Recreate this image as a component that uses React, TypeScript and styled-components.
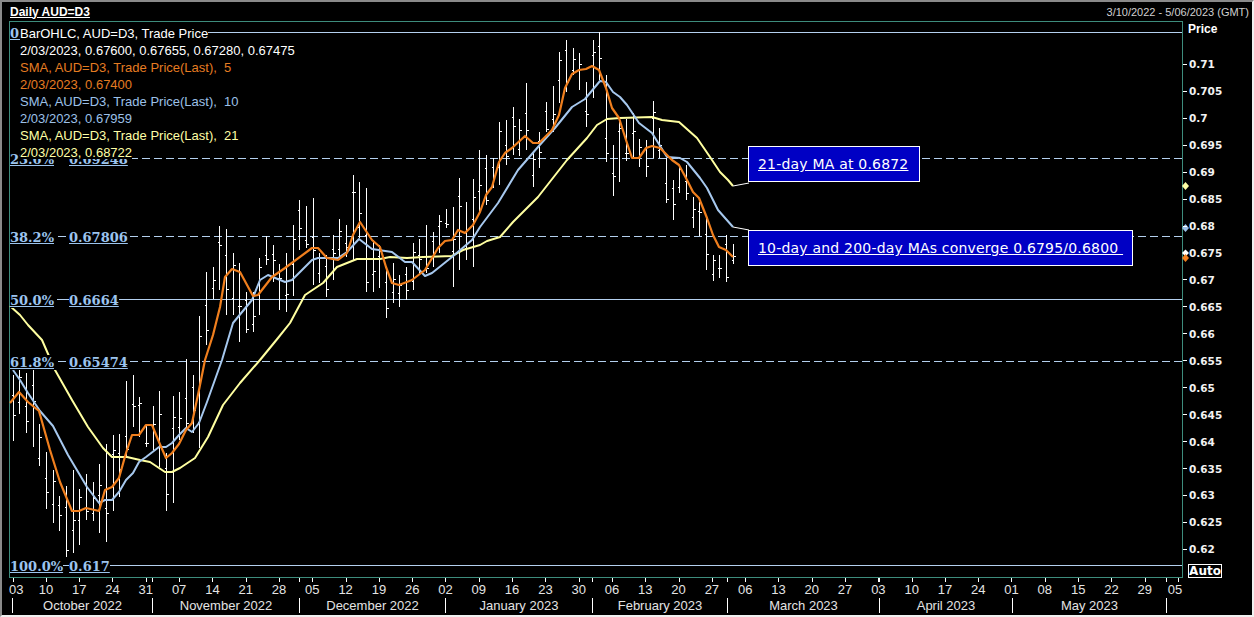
import React from "react";
import styled, { createGlobalStyle } from "styled-components";

const GlobalStyle = createGlobalStyle`
  html, body {
    margin: 0;
    background: #000;
    overflow: hidden;
  }
`;

// [high, low] of each daily bar, in page pixels
const bars: [number, number][] = [
  [375, 441], [370, 414], [373, 433], [370, 447], [424, 466], [452, 509], [470, 523], [496, 531], [486, 557], [470, 553],
  [489, 545], [474, 520], [482, 521], [464, 533], [444, 542], [435, 511], [434, 497], [381, 457], [375, 427], [397, 437],
  [425, 447], [406, 450], [391, 467], [453, 511], [396, 503], [392, 440], [359, 430], [375, 433], [316, 448], [272, 345],
  [267, 299], [226, 290], [229, 315], [253, 315], [263, 342], [292, 333], [292, 332], [258, 315], [236, 265], [245, 282],
  [264, 310], [253, 312], [225, 296], [200, 250], [206, 248], [198, 285], [253, 283], [255, 297], [235, 280], [219, 260],
  [225, 257], [175, 260], [182, 238], [188, 292], [240, 292], [245, 288], [267, 318], [263, 303], [275, 307], [267, 300],
  [243, 290], [239, 275], [225, 273], [232, 267], [215, 253], [209, 228], [207, 287], [178, 270], [202, 260], [179, 267],
  [150, 213], [155, 205], [158, 188], [122, 185], [120, 165], [107, 155], [119, 156], [83, 150], [152, 187], [132, 168],
  [102, 132], [86, 132], [52, 103], [40, 92], [48, 75], [53, 90], [82, 127], [40, 98], [32, 80], [75, 162],
  [145, 196], [118, 182], [119, 161], [113, 158], [139, 167], [140, 177], [101, 158], [128, 158], [158, 203], [180, 220],
  [165, 193], [165, 200], [197, 228], [202, 236], [218, 270], [255, 281], [255, 278], [235, 282], [244, 264],
];

const openAt = [0.3, 0.72, 0.55, 0.2, 0.8, 0.45, 0.65, 0.25];
const closeAt = [0.6, 0.15, 0.8, 0.4, 0.3, 0.7, 0.2, 0.55, 0.9];

const sma5 =
  "10,403 19,392 28,402 39,411 50,450 60,482 72,511 79,511 86,508 99,511 105,490 112,487 119,478 126,453 132,435 139,435 146,425 152,425 159,442 166,458 172,453 179,444 186,430 192,423 199,390 205,360 213,335 220,307 225,277 232,269 240,272 253,296 258,295 272,277 285,268 312,248 318,248 327,258 338,260 347,253 353,235 360,222 372,240 380,247 386,267 392,283 399,285 412,280 425,270 438,248 445,241 452,240 458,230 465,233 473,225 480,212 486,195 492,187 499,162 505,153 512,148 525,136 533,143 539,143 552,130 559,115 565,88 572,74 579,70 586,69 592,66 599,70 606,88 612,108 619,118 626,140 632,158 639,158 646,148 652,146 660,148 672,160 679,165 687,180 693,192 699,198 707,218 713,235 719,247 726,250 733,257";
const sma10 =
  "13,370 20,380 28,393 40,411 53,426 68,455 87,487 99,503 105,500 112,500 119,492 126,480 133,473 139,462 146,457 159,447 166,447 172,443 179,435 186,428 192,432 199,423 207,402 222,360 233,323 252,300 260,280 268,275 285,282 292,280 312,260 318,258 338,258 347,252 359,239 372,249 392,252 405,262 412,262 425,276 432,273 452,257 472,240 480,227 498,203 518,170 538,147 555,128 572,107 585,99 600,81 606,82 613,92 620,97 627,105 639,123 652,133 667,157 680,158 687,162 700,178 707,188 718,210 733,227";
const sma21 =
  "10,306 20,315 28,325 42,340 55,370 72,400 88,427 103,448 112,457 127,457 140,460 150,462 165,472 172,472 180,468 195,458 208,437 223,405 240,383 260,360 278,338 290,323 305,295 323,283 337,267 347,263 357,259 380,259 390,257 407,258 423,257 452,256 463,250 480,245 487,241 500,237 513,222 530,205 538,197 567,160 587,138 597,125 607,119 620,118 652,117 662,120 679,122 697,138 710,157 720,172 728,180 733,186";

const levels = [
  { y: 32.5, dashed: false },
  { y: 158.5, dashed: true },
  { y: 236.5, dashed: true },
  { y: 299.5, dashed: false },
  { y: 361.5, dashed: true },
  { y: 565.5, dashed: false },
];

const fibLabels = [
  { pct: "0.", price: "", y: 25, gap: 0 },
  { pct: "23.6%", price: "0.69248", y: 151, gap: 12 },
  { pct: "38.2%", price: "0.67806", y: 229, gap: 12 },
  { pct: "50.0%", price: "0.6664", y: 292, gap: 12 },
  { pct: "61.8%", price: "0.65474", y: 354, gap: 12 },
  { pct: "100.0%", price: "0.617", y: 558, gap: 6 },
];

const legend = [
  { text: "BarOHLC, AUD=D3, Trade Price", color: "#ffffff" },
  { text: "2/03/2023, 0.67600, 0.67655, 0.67280, 0.67475", color: "#ffffff" },
  { text: "SMA, AUD=D3, Trade Price(Last),  5", color: "#e57c22" },
  { text: "2/03/2023, 0.67400", color: "#e57c22" },
  { text: "SMA, AUD=D3, Trade Price(Last),  10", color: "#9cc0e8" },
  { text: "2/03/2023, 0.67959", color: "#9cc0e8" },
  { text: "SMA, AUD=D3, Trade Price(Last),  21", color: "#ffffa6" },
  { text: "2/03/2023, 0.68722", color: "#ffffa6" },
];

const prices = [
  "0.71", "0.705", "0.7", "0.695", "0.69", "0.685", "0.68", "0.675", "0.67", "0.665",
  "0.66", "0.655", "0.65", "0.645", "0.64", "0.635", "0.63", "0.625", "0.62",
];

const days = [
  "03", "10", "17", "24", "31", "07", "14", "21", "28", "05", "12", "19",
  "26", "02", "09", "16", "23", "30", "06", "13", "20", "27", "06", "13",
  "20", "27", "03", "10", "17", "24", "01", "08", "15", "22", "29", "05",
];

const months = [
  { name: "October 2022", width: 140 },
  { name: "November 2022", width: 147 },
  { name: "December 2022", width: 146 },
  { name: "January 2023", width: 147 },
  { name: "February 2023", width: 135 },
  { name: "March 2023", width: 152 },
  { name: "April 2023", width: 133 },
  { name: "May 2023", width: 154 },
];

const monthTicks = [152, 299, 445, 592, 727, 879, 1166];

const Price = () => (
  <PriceColumn>
    <PriceTitle>Price</PriceTitle>
    {prices.map((p, i) => (
      <PriceRow key={i}>{p}</PriceRow>
    ))}
    <AutoBox>Auto</AutoBox>
  </PriceColumn>
);

const App: React.FC = () => {
  return (
    <Page>
      <GlobalStyle />
      <TitleBar>
        <ChartTitle>Daily AUD=D3</ChartTitle>
        <DateRange>3/10/2022 - 5/06/2023 (GMT)</DateRange>
      </TitleBar>
      <ChartRow>
        <Plot>
          <ChartSvg viewBox="10 22 1172 555" width="1172" height="555">
            {levels.map((l) => (
              <line
                key={l.y}
                x1="10"
                x2="1182"
                y1={l.y}
                y2={l.y}
                stroke="#b4d0ee"
                strokeWidth="1"
                strokeDasharray={l.dashed ? "8 4" : undefined}
              />
            ))}
            {bars.map(([high, low], i) => {
              const x = Math.round(12.7 + i * 6.667) + 0.5;
              const open = Math.round(high + (low - high) * openAt[i % openAt.length]) + 0.5;
              const close = Math.round(high + (low - high) * closeAt[i % closeAt.length]) + 0.5;
              return (
                <g key={i} stroke="#fff" strokeWidth="1" shapeRendering="crispEdges">
                  <line x1={x} x2={x} y1={high} y2={low} />
                  <line x1={x - 2} x2={x} y1={open} y2={open} />
                  <line x1={x} x2={x + 2} y1={close} y2={close} />
                </g>
              );
            })}
            <polyline points={sma21} fill="none" stroke="#ffffa0" strokeWidth="2" strokeLinejoin="round" />
            <polyline points={sma10} fill="none" stroke="#a6c8ee" strokeWidth="2" strokeLinejoin="round" />
            <polyline points={sma5} fill="none" stroke="#f07f1e" strokeWidth="2.2" strokeLinejoin="round" />
            <polyline points="733,186 749,183" fill="none" stroke="#fff" strokeWidth="1" />
            <polyline points="733,227 749,230" fill="none" stroke="#fff" strokeWidth="1" />
            <path d="M1185.5 182l3.5 4-3.5 4-3.5-4z" fill="#ffffa6" />
            <path d="M1185.5 224l3.5 4-3.5 4-3.5-4z" fill="#9cc0e8" />
            <path d="M1185.5 249.5l3.5 3.5-3.5 3.5-3.5-3.5z" fill="#fff" />
            <path d="M1185.5 254l3.5 4-3.5 4-3.5-4z" fill="#f07f1e" />
          </ChartSvg>

          {fibLabels.map((f) => (
            <FibLabel key={f.pct} $top={f.y - 22}>
              <FibText>{f.pct}</FibText>
              {f.price && <FibPrice $gap={f.gap}>{f.price}</FibPrice>}
            </FibLabel>
          ))}

          <Legend>
            {legend.map((l, i) => (
              <LegendRow key={i} $color={l.color}>
                {l.text}
              </LegendRow>
            ))}
          </Legend>

          <Callout $top={124} $width={172}>
            <span>21-day MA at 0.6872</span>
          </Callout>
          <Callout $top={208} $width={385}>
            <span>10-day and 200-day MAs converge 0.6795/0.6800&nbsp;</span>
          </Callout>
        </Plot>
        <Price />
      </ChartRow>

      <TickStrip width="1254" height="4">
        {days.map((_, i) => {
          const x = Math.round(12.5 + i * 33.3) + 0.5;
          return <line key={i} x1={x} x2={x} y1="0" y2="4" stroke="#fff" />;
        })}
        {monthTicks.map((t) => (
          <line key={t} x1={t + 0.5} x2={t + 0.5} y1="0" y2="4" stroke="#fff" />
        ))}
      </TickStrip>
      <DayRow>
        {days.map((d, i) => (
          <DayCell key={i} $first={i === 0} $last={i === days.length - 1}>
            {d}
          </DayCell>
        ))}
      </DayRow>
      <MonthRow>
        {months.map((m) => (
          <MonthCell key={m.name} $width={m.width}>
            {m.name}
          </MonthCell>
        ))}
        <MonthEnd />
      </MonthRow>
    </Page>
  );
};

const Page = styled.div`
  box-sizing: border-box;
  width: 1254px;
  height: 617px;
  overflow: hidden;
  background: #000;
  border-top: 2px solid #8a8a8a;
  border-left: 2px solid #8a8a8a;
  border-right: 2px solid #f0f0f0;
  border-bottom: 2px solid #f0f0f0;
  display: flex;
  flex-direction: column;
  font-family: "Liberation Sans", Arial, sans-serif;
  color: #fff;
`;

const TitleBar = styled.div`
  height: 19px;
  padding: 0 3px 0 8px;
  display: flex;
  justify-content: space-between;
  align-items: center;
`;

const ChartTitle = styled.div`
  font-size: 12px;
  font-weight: bold;
  text-decoration: underline;
`;

const DateRange = styled.div`
  font-size: 11px;
  color: #d0d0d0;
`;

const ChartRow = styled.div`
  display: flex;
  height: 557px;
  padding-left: 7px;
`;

const Plot = styled.div`
  position: relative;
  box-sizing: border-box;
  width: 1174px;
  height: 557px;
  border: 1px solid #3d8c7c;
`;

const ChartSvg = styled.svg`
  display: block;
  overflow: visible;
`;

const FibLabel = styled.div<{ $top: number }>`
  position: absolute;
  left: 0;
  top: ${(p) => p.$top}px;
  display: flex;
  align-items: center;
  height: 16px;
  font-family: "DejaVu Serif", serif;
  font-size: 13px;
  font-weight: bold;
  color: #9cc4ee;
  text-decoration: underline;
`;

const FibText = styled.span`
  background: #000;
  min-width: 47px;
`;

const FibPrice = styled.span<{ $gap: number }>`
  background: #000;
  margin-left: ${(p) => p.$gap}px;
`;

const Legend = styled.div`
  position: absolute;
  left: 10px;
  top: 1px;
  display: flex;
  flex-direction: column;
  align-items: flex-start;
`;

const LegendRow = styled.div<{ $color: string }>`
  height: 17px;
  line-height: 21px;
  font-size: 13px;
  white-space: pre;
  background: #000;
  color: ${(p) => p.$color};
`;

const Callout = styled.div<{ $top: number; $width: number }>`
  position: absolute;
  left: 738px;
  top: ${(p) => p.$top}px;
  box-sizing: border-box;
  width: ${(p) => p.$width}px;
  height: 36px;
  padding-left: 9px;
  display: flex;
  align-items: center;
  background: #0000c4;
  border: 1px solid #fff;
  font-family: "DejaVu Sans", sans-serif;
  font-size: 14px;
  letter-spacing: 0.2px;
  white-space: pre;
  text-decoration: underline;
`;

const PriceColumn = styled.div`
  position: relative;
  flex: 1;
  height: 557px;
  display: flex;
  flex-direction: column;
  font-family: "DejaVu Sans", sans-serif;
  font-size: 10.5px;
  font-weight: bold;
  color: #f2f2f2;
`;

const PriceTitle = styled.div`
  height: 29px;
  padding: 1px 0 0 5px;
  font-family: "Liberation Sans", Arial, sans-serif;
  font-size: 12px;
  line-height: 14px;
  color: #fff;
`;

const PriceRow = styled.div`
  flex: 0 0 26.94px;
  display: flex;
  align-items: center;
  gap: 2px;
  &::before {
    content: "";
    width: 4px;
    height: 1px;
    background: #fff;
  }
`;

const AutoBox = styled.div`
  position: absolute;
  left: 5px;
  bottom: 0;
  box-sizing: border-box;
  width: 34px;
  height: 14px;
  line-height: 12px;
  text-align: center;
  font-size: 12px;
  border: 1px solid #fff;
  color: #fff;
  background: #000;
`;

const TickStrip = styled.svg`
  display: block;
  flex: none;
  margin-left: -2px;
`;

const DayRow = styled.div`
  display: flex;
  height: 16px;
  margin-left: -6px;
  font-size: 13px;
  line-height: 16px;
  color: #e4e4e4;
`;

const DayCell = styled.div<{ $first: boolean; $last: boolean }>`
  flex: 0 0 33.3px;
  box-sizing: border-box;
  text-align: center;
  padding-left: ${(p) => (p.$first ? 7 : 0)}px;
  padding-right: ${(p) => (p.$last ? 6 : 0)}px;
`;

const MonthRow = styled.div`
  display: flex;
  height: 15px;
  margin-left: 10px;
  font-size: 13px;
  line-height: 15px;
  color: #e4e4e4;
`;

const MonthCell = styled.div<{ $width: number }>`
  flex: 0 0 ${(p) => p.$width}px;
  box-sizing: border-box;
  text-align: center;
  border-left: 1px solid #fff;
`;

const MonthEnd = styled.div`
  border-left: 1px solid #fff;
`;

export default App;
